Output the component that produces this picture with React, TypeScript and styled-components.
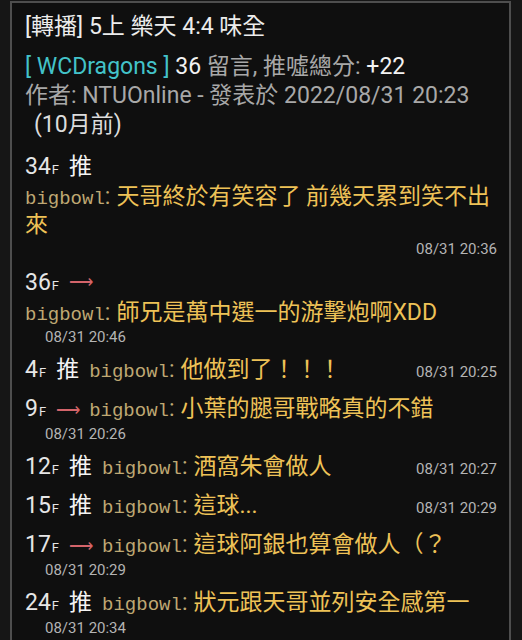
import React from "react";
import styled, { createGlobalStyle } from "styled-components";

const Global = createGlobalStyle`
  html, body { margin: 0; padding: 0; background: #161616; }
  body { font-family: Roboto, "Noto Sans CJK TC", sans-serif; }
`;

const Page = styled.div`
  padding: 1px 11px 0 10px;
  height: 639px;
  overflow: hidden;
`;

const Card = styled.div`
  background: #0f0f0f;
  border: 2px solid #4e4e4e;
  border-bottom: none;
  min-height: 700px;
  padding: 9px 12px 0 13px;
  font-size: 23px;
`;

const Title = styled.div`
  color: #ececec;
  line-height: 30px;
  margin-bottom: 10px;
  white-space: nowrap;
`;

const Meta = styled.div<{ $indent?: boolean }>`
  line-height: 29px;
  color: #a8a8a8;
  white-space: nowrap;
  padding-left: ${(p) => (p.$indent ? "9px" : "0")};
`;

const Board = styled.span`
  color: #43c3c9;
`;

const Num = styled.span`
  color: #f2f2f2;
`;

const Ago = styled.span`
  color: #dcdcdc;
`;

const List = styled.div`
  margin-top: 8px;
`;

const Comment = styled.div<{ $single?: boolean }>`
  padding: 4px 0 ${(p) => (p.$single ? "5px" : "4px")};
`;

const Head = styled.div`
  height: 30px;
  margin-bottom: 2px;
  display: flex;
  align-items: center;
`;

const Line = styled.div`
  height: 30px;
  display: flex;
  align-items: baseline;
  white-space: nowrap;
  padding-top: 3px;
  box-sizing: border-box;
`;

const Body = styled.div`
  line-height: 28px;
`;

const Floor = styled.span`
  color: #e6e6e6;
  margin-right: 10px;
  white-space: nowrap;
  line-height: 1;
`;

const FloorF = styled.span`
  font-size: 13px;
  line-height: 1;
  margin-left: 1px;
`;

const Tag = styled.span<{ $kind: "push" | "arrow" }>`
  display: inline-block;
  width: 23px;
  margin-right: 10px;
  line-height: 1;
  color: ${(p) => (p.$kind === "push" ? "#f4f4f4" : "#d4646a")};
  font-family: ${(p) =>
    p.$kind === "push" ? `Roboto, "Noto Sans CJK TC", sans-serif` : `"DejaVu Sans", sans-serif`};
  font-size: ${(p) => (p.$kind === "push" ? "23px" : "17px")};
  font-weight: ${(p) => (p.$kind === "push" ? 400 : 300)};
`;

const User = styled.span`
  color: #bfa873;
  font-family: "Liberation Mono", monospace;
  font-size: 19px;
  line-height: 1;
`;

const Colon = styled.span`
  color: #bfa873;
  line-height: 1;
  margin-right: 6px;
`;

const Text = styled.span`
  color: #eec257;
  line-height: 1;
`;

const Time = styled.span`
  color: #b4b4b4;
  font-size: 15px;
  line-height: 1;
  margin-left: auto;
  white-space: nowrap;
`;

const TimeLine = styled.div<{ $right?: boolean }>`
  color: #b4b4b4;
  font-size: 15px;
  line-height: 20px;
  text-align: ${(p) => (p.$right ? "right" : "left")};
  padding-left: ${(p) => (p.$right ? "0" : "20px")};
`;

type Mode = "stackRight" | "stackIndent" | "inline" | "inlineWrap";

interface C {
  floor: number;
  tag: "push" | "arrow";
  text: string;
  time: string;
  mode: Mode;
}

const comments: C[] = [
  { floor: 34, tag: "push", text: "天哥終於有笑容了 前幾天累到笑不出來", time: "08/31 20:36", mode: "stackRight" },
  { floor: 36, tag: "arrow", text: "師兄是萬中選一的游擊炮啊XDD", time: "08/31 20:46", mode: "stackIndent" },
  { floor: 4, tag: "push", text: "他做到了！！！", time: "08/31 20:25", mode: "inline" },
  { floor: 9, tag: "arrow", text: "小葉的腿哥戰略真的不錯", time: "08/31 20:26", mode: "inlineWrap" },
  { floor: 12, tag: "push", text: "酒窩朱會做人", time: "08/31 20:27", mode: "inline" },
  { floor: 15, tag: "push", text: "這球...", time: "08/31 20:29", mode: "inline" },
  { floor: 17, tag: "arrow", text: "這球阿銀也算會做人（？", time: "08/31 20:29", mode: "inlineWrap" },
  { floor: 24, tag: "push", text: "狀元跟天哥並列安全感第一", time: "08/31 20:34", mode: "inlineWrap" },
];

const FloorTag = ({ c }: { c: C }) => (
  <>
    <Floor>
      {c.floor}
      <FloorF>F</FloorF>
    </Floor>
    <Tag $kind={c.tag}>{c.tag === "push" ? "推" : "⟶"}</Tag>
  </>
);

const Said = ({ c }: { c: C }) => (
  <>
    <User>bigbowl</User>
    <Colon>:</Colon>
    <Text>{c.text}</Text>
  </>
);

const CommentItem = ({ c }: { c: C }) => {
  if (c.mode === "stackRight" || c.mode === "stackIndent") {
    return (
      <Comment>
        <Head>
          <FloorTag c={c} />
        </Head>
        <Body>
          <Said c={c} />
        </Body>
        <TimeLine $right={c.mode === "stackRight"}>{c.time}</TimeLine>
      </Comment>
    );
  }
  if (c.mode === "inline") {
    return (
      <Comment $single>
        <Line>
          <FloorTag c={c} />
          <Said c={c} />
          <Time>{c.time}</Time>
        </Line>
      </Comment>
    );
  }
  return (
    <Comment>
      <Line>
        <FloorTag c={c} />
        <Said c={c} />
      </Line>
      <TimeLine>{c.time}</TimeLine>
    </Comment>
  );
};

export default function App() {
  return (
    <>
      <Global />
      <Page>
        <Card>
          <Title>[轉播] 5上 樂天 4:4 味全</Title>
          <Meta>
            <Board>[ WCDragons ]</Board> <Num>36</Num> 留言, 推噓總分: <Num>+22</Num>
          </Meta>
          <Meta>作者: NTUOnline - 發表於 2022/08/31 20:23</Meta>
          <Meta $indent>
            <Ago>(10月前)</Ago>
          </Meta>
          <List>
            {comments.map((c) => (
              <CommentItem key={c.floor} c={c} />
            ))}
          </List>
        </Card>
      </Page>
    </>
  );
}
